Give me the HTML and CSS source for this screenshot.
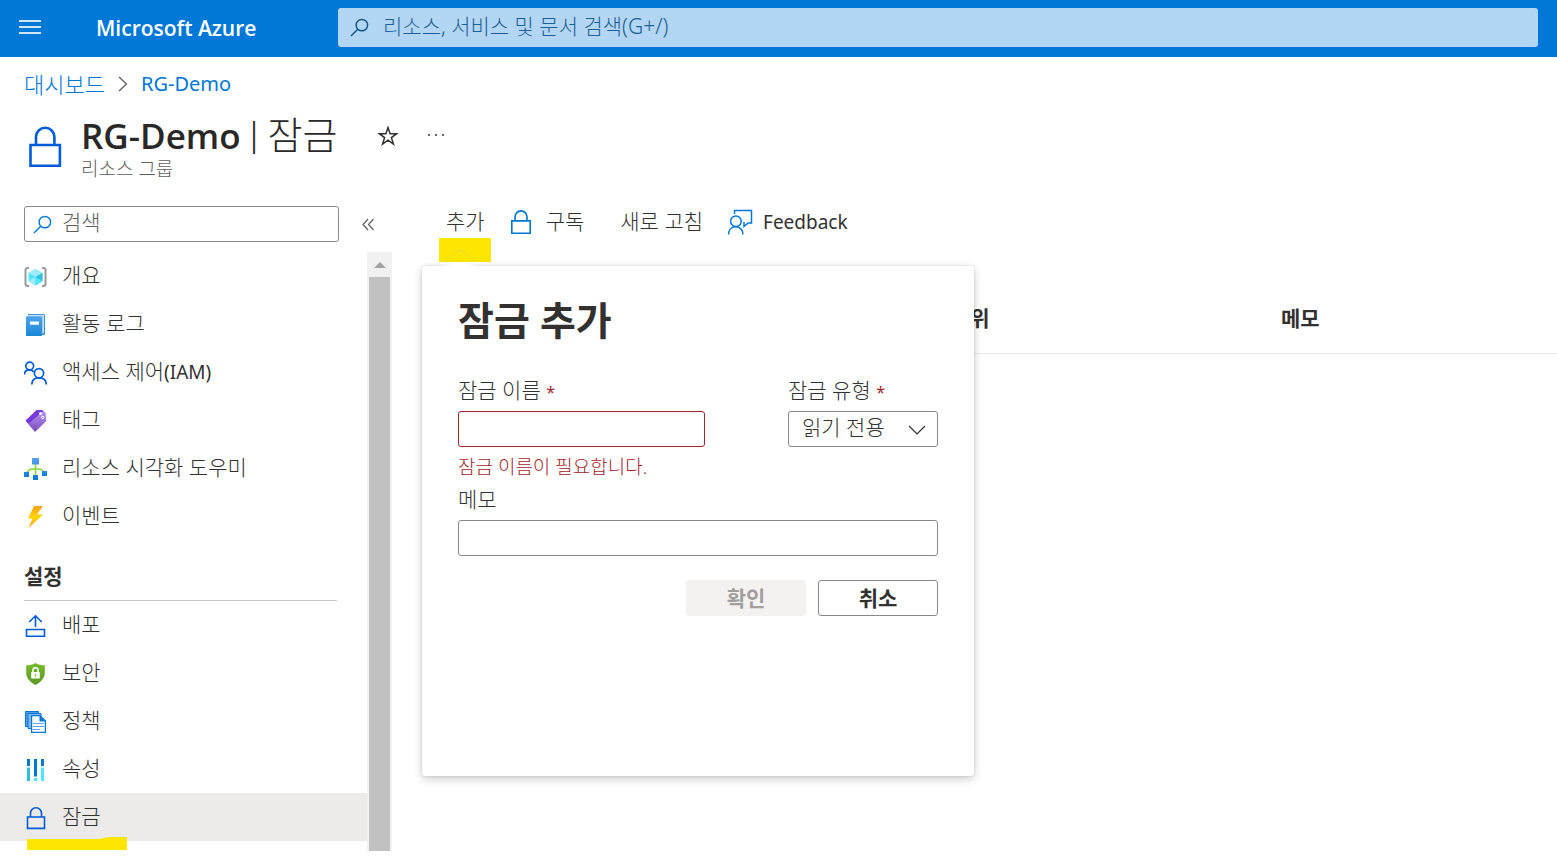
FILE: index.html
```html
<!DOCTYPE html>
<html lang="ko">
<head>
<meta charset="utf-8">
<title>RG-Demo | 잠금 - Microsoft Azure</title>
<link rel="stylesheet" href="styles.css">
</head>
<body>
<svg class="defs" aria-hidden="true">
  <defs>
    <linearGradient id="blue" x1="0" y1="0" x2="0" y2="1"><stop offset="0" stop-color="#5ea0ef"/><stop offset="1" stop-color="#0078d4"/></linearGradient>
    <linearGradient id="book" x1="0" y1="0" x2="0" y2="1"><stop offset="0" stop-color="#4ea5ea"/><stop offset="1" stop-color="#1a86d6"/></linearGradient>
    <linearGradient id="purple" x1="0" y1="0" x2="0" y2="1"><stop offset="0" stop-color="#b796f9"/><stop offset="1" stop-color="#7a4ab8"/></linearGradient>
    <linearGradient id="bolt" x1="0" y1="0" x2="0" y2="1"><stop offset="0" stop-color="#fea11b"/><stop offset=".5" stop-color="#ffd400"/><stop offset="1" stop-color="#fea11b"/></linearGradient>
    <linearGradient id="green" x1="0" y1="0" x2="0" y2="1"><stop offset="0" stop-color="#76bc2d"/><stop offset="1" stop-color="#5e9624"/></linearGradient>
    <symbol id="lock" viewBox="0 0 24 24"><path d="M6.500 11V7.200a5.500 5.500 0 0 1 11 0V11M3.500 11h17v11.400h-17z"/></symbol>
    <symbol id="lens" viewBox="0 0 20 20"><circle cx="12.500" cy="7.500" r="6"/><path d="M8.200 11.800 1 19"/></symbol>
  </defs>
</svg>

<header class="topbar">
  <button class="menu-button" aria-label="메뉴"><svg viewBox="0 0 22 16"><path d="M0 1h22M0 7h22M0 13h22"/></svg></button>
  <a class="brand" href="#">Microsoft Azure</a>
  <label class="global-search">
    <svg class="lens"><use href="#lens"/></svg>
    <input type="text" aria-label="리소스, 서비스 및 문서 검색" placeholder="리소스, 서비스 및 문서 검색(G+/)">
  </label>
</header>

<nav class="breadcrumb" aria-label="경로">
  <a href="#">대시보드</a>
  <svg viewBox="0 0 10 16"><path d="M1 1l7.500 7L1 15"/></svg>
  <a class="latin" href="#">RG-Demo</a>
</nav>

<div class="heading">
  <svg class="heading-icon" viewBox="0 0 34 44"><path d="M8 20V12a9.200 9.200 0 0 1 18.400 0V20M2.500 20h29.400v20.800H2.500z"/></svg>
  <div>
    <div class="heading-row">
      <h1>RG-Demo<span class="bar"> | </span><span class="light">잠금</span></h1>
      <button class="star" aria-label="즐겨찾기"><svg viewBox="0 0 20 20"><path d="M10 1.500l2.100 6.200h6.600l-5.300 3.900 2 6.400-5.400-3.900L4.600 18l2-6.400-5.300-3.900h6.600z"/></svg></button>
      <button class="more" aria-label="더 보기"><svg viewBox="0 0 18 4"><circle cx="2" cy="2" r="1"/><circle cx="9" cy="2" r="1"/><circle cx="16" cy="2" r="1"/></svg></button>
    </div>
    <p class="subtitle">리소스 그룹</p>
  </div>
</div>

<div class="workspace">
  <aside class="sidebar">
    <div class="filter">
      <label class="filter-box">
        <svg class="lens"><use href="#lens"/></svg>
        <input type="text" aria-label="검색" placeholder="검색">
      </label>
      <button class="collapse" aria-label="접기"><svg viewBox="0 0 13 13"><path d="M6 1 1 6.500 6 12M11.500 1l-5 5.500 5 5.500"/></svg></button>
    </div>
    <div class="menu-area">
      <div class="menu">
        <a class="item" href="#"><svg viewBox="0 0 24 24"><path d="M5 3H3.500a2 2 0 0 0-2 2v14a2 2 0 0 0 2 2H5M18 3h1.500a2 2 0 0 1 2 2v14a2 2 0 0 1-2 2H18" fill="none" stroke="#999" stroke-width="2"/><path d="M11.500 4l7 4v8l-7 4.500L4.500 16V8z" fill="#50e6ff"/><path d="M11.500 4l7 4-7 4-7-4z" fill="#9cebff"/><path d="M11.500 12l7-4v8l-7 4.500z" fill="#32bedd"/><path d="M11.500 12l-7 4 7 4.500z" fill="#9cebff"/><path d="M11.500 12l7 4-7 4.500z" fill="#50e6ff"/></svg>개요</a>
        <a class="item" href="#"><svg viewBox="0 0 24 24"><path d="M4 1h15.300A1.700 1.700 0 0 1 21 2.700v17.600a1.700 1.700 0 0 1-1.700 1.700H4z" fill="#1b7fcc"/><path d="M4.500 1.800H19q1.200 0 1.200 1.200v17l-2 1V4H3.500z" fill="#c3dff5"/><path d="M2 4.200q0-1 1-1h14q1 0 1 1V23H3q-1 0-1-1z" fill="url(#book)"/><path d="M6 8.500h9v3.200H6z" fill="#fff"/></svg>활동 로그</a>
        <a class="item" href="#"><svg viewBox="0 0 24 24" fill="none" stroke="#015cda" stroke-width="1.700"><circle cx="5.700" cy="5" r="3.900"/><circle cx="15" cy="12.200" r="4.600"/><path d="M.5 13.500c0-3 2-4.600 4.800-4.600 2 0 3.500.7 4.400 2M7.800 23.500c0-4 2.600-6.700 7.200-6.700s7.300 2.700 7.300 6.700"/></svg><span>액세스 제어<span class="latin">(IAM)</span></span></a>
        <a class="item" href="#"><svg viewBox="0 0 24 24"><path d="M13 2l6.500-.2 2.300 2.500.2 8L11 23 2 12.500z" fill="url(#purple)"/><path d="M12.500 1h5.200q1 0 1.500 1L4.900 14.500 1.500 11.500z" fill="#773adc"/><g fill="#fff"><circle cx="16.500" cy="4.500" r="1.500"/><circle cx="18.700" cy="8.300" r="1.600"/></g><circle cx="18.700" cy="8.300" r=".6" fill="#773adc"/></svg>태그</a>
        <a class="item" href="#"><svg viewBox="0 0 24 24"><path d="M11.500 6v14M2.500 17c1-3.500 4-5 6.500-5h5c3 0 5.500 1.500 6.500 5" fill="none" stroke="#86d633" stroke-width="1.600"/><path d="M8 1h7v6.500H8zM0 15h5v5H0zM9 18h5v5H9zM18 14h5v5h-5z" fill="url(#blue)"/></svg>리소스 시각화 도우미</a>
        <a class="item" href="#"><svg viewBox="0 0 24 24"><path d="M10 1h9l-6 8.500h6L4.500 23l4-9.500H4z" fill="url(#bolt)"/></svg>이벤트</a>
        <h2 class="section">설정</h2>
        <a class="item" href="#"><svg viewBox="0 0 24 24" fill="none" stroke="#015cda" stroke-width="1.600"><path d="M2.500 15.500h18v6.800h-18zM11.500 13V1.800M5.200 8l6.300-6.200L17.800 8"/></svg>배포</a>
        <a class="item" href="#"><svg viewBox="0 0 24 24"><path d="M11.500 1c3 2 6 2.200 9.300 2.300V11c0 6-5 9.500-9.300 12C7.200 20.500 2.200 17 2.200 11V3.300C5.500 3.200 8.500 3 11.500 1z" fill="url(#green)"/><path d="M8.900 10.500V8.400a2.600 2.600 0 0 1 5.200 0v2.100" fill="none" stroke="#fff" stroke-width="1.500"/><rect x="7.200" y="10" width="8.600" height="6.500" rx=".6" fill="#fff"/><path d="M10.900 12h1.200v2.500h-1.200z" fill="#76bc2d"/></svg>보안</a>
        <a class="item" href="#"><svg viewBox="0 0 24 24"><path d="M1.500 1.500h13v15h-13z" fill="#4f9de8" stroke="#0078d4"/><path d="M4 3.500h13v15H4z" fill="#83b9f9" stroke="#0078d4"/><path d="M7.600 5.600H16l5.400 5.400v11.400H7.600z" fill="#fff" stroke="#0078d4" stroke-width="1.300"/><path d="M15.500 4.800l6.500 6.700h-6.500z" fill="#0078d4"/><path d="M9 13.500h11M9 16.500h11M9 19.500h7" stroke="#5ea0ef" stroke-width="1.200"/></svg>정책</a>
        <a class="item" href="#"><svg viewBox="0 0 24 24"><path d="M3 1h3v7H3zM10 1h3v17.500h-3zM17 1h3v7h-3z" fill="#0078d4"/><path d="M3 9.500h3V23H3z" fill="#32bedd"/><path d="M10 20h3v3h-3zM17 9.500h3V23h-3z" fill="#50e6ff"/></svg>속성</a>
        <a class="item selected" href="#" aria-current="page"><svg class="lock"><use href="#lock"/></svg>잠금
          <svg class="marker" viewBox="0 0 100 14" preserveAspectRatio="none"><path d="M0 3h72l10-2h18v13H0z"/></svg></a>
      </div>
      <div class="scrollbar"><span class="arrow"></span><span class="thumb"></span></div>
    </div>
  </aside>

  <main class="main">
    <div class="toolbar">
      <div class="add">
        <button class="command">추가</button>
        <svg class="highlight" viewBox="0 0 52 24"><path d="M0 0h52v24H0z" fill="#ffe600"/><path d="M5 24 21 12l16 12" stroke="#efe21a" stroke-width="2"/></svg>
        <form class="callout">
          <span class="beak"></span>
          <h2>잠금 추가</h2>
          <div class="fields">
            <div class="field name">
              <label for="lock-name">잠금 이름 <span class="required">*</span></label>
              <input class="box invalid" id="lock-name" type="text" aria-describedby="name-error">
              <p class="error" id="name-error">잠금 이름이 필요합니다.</p>
            </div>
            <div class="field type">
              <label for="lock-type">잠금 유형 <span class="required">*</span></label>
              <div class="select">
                <select class="box" id="lock-type"><option>읽기 전용</option></select>
                <svg viewBox="0 0 18 10"><path d="M1 1l8 8 8-8"/></svg>
              </div>
            </div>
          </div>
          <div class="field">
            <label for="memo">메모</label>
            <input class="box" id="memo" type="text">
          </div>
          <div class="actions">
            <button type="button" disabled>확인</button>
            <button type="button">취소</button>
          </div>
        </form>
      </div>
      <button class="command subscription"><svg class="lock"><use href="#lock"/></svg>구독</button>
      <button class="command refresh">새로 고침</button>
      <button class="command feedback"><svg viewBox="0 0 26 26"><path d="M7.500 5V1.500h17V14h-3.300L17 17.500V13M1.500 25.500c0-4.500 2.800-7.800 7.200-7.800s7.300 3.300 7.300 7.800"/><circle cx="8.900" cy="12.200" r="5.300"/></svg><span class="latin">Feedback</span></button>
    </div>
    <table class="locks">
      <thead><tr><td></td><th scope="col">범위</th><th scope="col">메모</th></tr></thead>
    </table>
  </main>
</div>
</body>
</html>
```
FILE: styles.css
```css
* { box-sizing: border-box; }

body {
  margin: 0;
  background: #fff;
  color: #323130;
  font: 300 21px/28px "Noto Sans", "Noto Sans CJK KR", sans-serif;
}

h1, h2, p { margin: 0; }
a { text-decoration: none; }
svg { flex: none; fill: none; }
.defs { position: absolute; width: 0; height: 0; }
.latin { font-size: 19px; font-weight: 400; }

button, input, select { font: inherit; color: inherit; }
button { padding: 0; border: 0; background: none; }

.topbar {
  display: flex;
  align-items: center;
  height: 57px;
  padding: 0 19px 2px;
  background: #0078d7;
}
.menu-button { display: flex; width: 22px; }
.menu-button svg { width: 22px; height: 16px; stroke: #cfe5f7; stroke-width: 2; }
.brand {
  width: 242px;
  margin-left: 55px;
  color: #fff;
  font-family: "Open Sans", sans-serif;
  font-size: 21px;
  font-weight: 600;
}
.global-search {
  display: flex;
  flex: 1;
  align-items: center;
  gap: 14px;
  height: 39px;
  padding: 0 12px;
  border-radius: 3px;
  background: #b2d6f3;
  color: #0f548c;
}
.global-search input, .filter-box input {
  flex: 1;
  min-width: 0;
  padding: 0 0 4px;
  border: 0;
  outline: 0;
  background: none;
}
.global-search input::placeholder { color: #1d5f96; }
.lens { width: 19px; height: 19px; stroke: currentColor; stroke-width: 1.5; }

.breadcrumb {
  display: flex;
  align-items: center;
  gap: 13px;
  height: 54px;
  padding: 0 24px;
}
.breadcrumb a { color: #0078d4; font-size: 22px; }
.breadcrumb a.latin { font-size: 20px; }
.breadcrumb svg { width: 10px; height: 16px; stroke: #605e5c; stroke-width: 1.3; }

.heading {
  display: flex;
  gap: 19px;
  height: 95px;
  padding: 0 28px;
}
.heading-icon { width: 34px; height: 44px; margin-top: 14px; stroke: #015cda; stroke-width: 2.6; }
.heading-row { display: flex; align-items: center; height: 47px; }
.heading h1 {
  font-family: "Open Sans", "Noto Sans CJK KR", sans-serif;
  font-size: 35px;
  line-height: 44px;
  font-weight: 600;
  color: #292827;
}
.heading h1 .bar { font-family: Roboto, sans-serif; font-size: 38px; font-weight: 300; }
.heading h1 .light { font-size: 38px; font-weight: 300; }
.star { display: flex; margin-left: 41px; padding-top: 3px; }
.star svg { width: 20px; height: 20px; stroke: #323130; stroke-width: 1.5; }
.more { display: flex; margin-left: 29px; }
.more svg { width: 18px; height: 4px; fill: #323130; }
.subtitle { font-size: 19px; line-height: 22px; color: #605e5c; }

.workspace { display: flex; align-items: flex-start; }
.sidebar { flex: none; width: 392px; }
.filter { display: flex; align-items: center; height: 46px; padding: 0 0 10px 24px; }
.filter-box {
  display: flex;
  align-items: center;
  gap: 10px;
  width: 315px;
  height: 36px;
  padding: 0 8px;
  border: 1px solid #8a8886;
  border-radius: 3px;
}
.filter-box .lens { color: #0078d4; }
.filter-box input::placeholder { color: #605e5c; }
.collapse { display: flex; margin-left: 23px; }
.collapse svg { width: 13px; height: 13px; stroke: #605e5c; stroke-width: 1.2; }

.menu-area { display: flex; }
.menu { flex: 1; padding-bottom: 10px; }
.item {
  display: flex;
  position: relative;
  align-items: center;
  gap: 14px;
  height: 48px;
  padding: 0 24px 2px;
  color: #323130;
}
.item svg { width: 24px; height: 24px; margin-top: 4px; }
.item svg.lock { stroke: #015cda; stroke-width: 1.6; }
.item.selected { background: #edebe9; }
.item .marker { position: absolute; top: 43px; left: 27px; width: 100px; height: 14px; margin: 0; fill: #ffe600; }
.section {
  height: 61px;
  margin: 0 30px 0 24px;
  border-bottom: 1px solid #c8c6c4;
  font-size: 21px;
  font-weight: 600;
  line-height: 72px;
}
.scrollbar {
  display: flex;
  flex-direction: column;
  align-items: center;
  width: 25px;
  background: #f1f1f1;
}
.arrow {
  margin: 10px 0 9px;
  border: 6px solid transparent;
  border-top: 0;
  border-bottom-color: #a3a3a3;
}
.thumb { flex: 1; width: 21px; background: #c1c1c1; }

.main { flex: 1; min-width: 0; }
.toolbar { display: flex; align-items: center; height: 32px; padding-left: 54px; }
.add { position: relative; }
.command { display: flex; align-items: center; gap: 12px; height: 32px; padding-bottom: 2px; white-space: nowrap; }
.command svg { width: 26px; height: 26px; margin-top: 2px; stroke: #0078d4; stroke-width: 1.5; }
.subscription { margin-left: 23px; }
.refresh { margin: 0 24px 0 36px; }
.feedback { gap: 10px; padding-bottom: 0; }
.feedback svg { margin-top: 0; }
.highlight { position: absolute; top: 32px; left: -7px; width: 52px; height: 24px; }

.callout {
  position: absolute;
  z-index: 1;
  top: 60px;
  left: -24px;
  width: 552px;
  padding: 30px 36px 160px;
  border-radius: 3px;
  background: #fff;
  box-shadow: 0 3px 10px rgba(0, 0, 0, .2), 0 0 3px rgba(0, 0, 0, .12);
}
.beak {
  position: absolute;
  top: -4px;
  left: 22px;
  border: 16px solid transparent;
  border-top: 0;
  border-bottom: 4px solid #fff;
}
.callout h2 { font-size: 39px; line-height: 48px; font-weight: 600; }
.fields { display: flex; justify-content: space-between; margin-top: 30px; }
.field { display: flex; flex-direction: column; }
.field.name { width: 247px; }
.field.type { width: 150px; }
.field label { line-height: 32px; margin-bottom: 5px; }
.required { color: #a4262c; font-size: 16px; line-height: 16px; font-weight: 400; }
.box {
  width: 100%;
  height: 36px;
  padding: 0 13px;
  border: 1px solid #8a8886;
  border-radius: 3px;
  outline: 0;
  background: #fff;
}
.box.invalid { border-color: #a4262c; }
.error { margin-top: 7px; font-size: 19px; line-height: 26px; color: #a4262c; }
.fields + .field { margin-top: 3px; }
.select { position: relative; }
.select select { appearance: none; padding-bottom: 5px; }
.select svg {
  position: absolute;
  top: 14px;
  right: 12px;
  width: 18px;
  height: 10px;
  stroke: #323130;
  stroke-width: 1.2;
  pointer-events: none;
}
.actions { display: flex; justify-content: flex-end; gap: 12px; margin-top: 24px; }
.actions button {
  width: 120px;
  height: 36px;
  border: 1px solid #8a8886;
  border-radius: 3px;
  font-weight: 600;
}
.actions button:disabled { border-color: #f3f2f1; background: #f3f2f1; color: #a19f9d; }

.locks { width: 100%; margin-top: 46px; border-collapse: collapse; table-layout: fixed; }
.locks td { width: 559px; }
.locks th {
  height: 69px;
  padding: 0;
  border-bottom: 1px solid #edebe9;
  font-weight: 600;
  text-align: left;
}
.locks th:first-of-type { width: 330px; }
```
